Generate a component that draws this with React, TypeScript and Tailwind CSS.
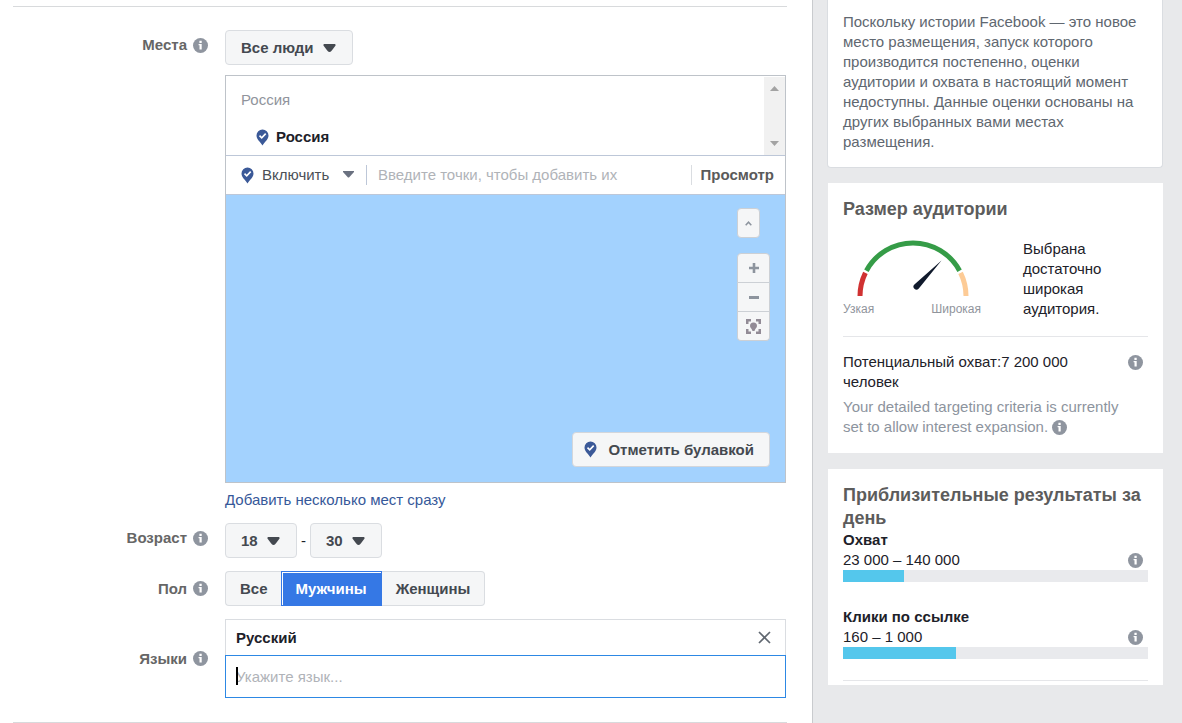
import type { ReactNode } from "react";
import clsx from "clsx";

const GENDERS = ["Все", "Мужчины", "Женщины"];

const RESULTS = [
  { title: "Охват", range: "23 000 – 140 000", percent: 20 },
  { title: "Клики по ссылке", range: "160 – 1 000", percent: 37 },
];

export default function App() {
  return (
    <div className="flex min-h-screen bg-white font-['Liberation_Sans',Arial,sans-serif] text-[15px] leading-5 text-[#1d2129]">
      <main className="min-w-0 flex-1 pt-1.5 pr-[25px] pl-[13px]">
        <div className="flex flex-col gap-[13px] border-y border-[#d8dadc] pt-[23px] pr-px pb-6">
          <Row label="Места" htmlFor="people" top>
            <PickList id="people" value="Все люди" className="w-32 pl-[15px]" />
            <Locations />
            <a href="#bulk" className="mt-[7px] block text-[#365899]">
              Добавить несколько мест сразу
            </a>
          </Row>

          <Row label="Возраст" htmlFor="age-from" top>
            <div className="flex items-center">
              <PickList id="age-from" value="18" className="w-[72px] pl-[15px]" />
              <span className="w-[13px] text-center">-</span>
              <PickList id="age-to" ariaLabel="Возраст до" value="30" className="w-[72px] pl-[15px]" />
            </div>
          </Row>

          <Row label="Пол">
            <div role="radiogroup" aria-label="Пол" className="flex h-[35px]">
              {GENDERS.map((gender, i) => (
                <label
                  key={gender}
                  className={clsx(
                    "relative flex items-center border font-bold",
                    gender === "Мужчины"
                      ? "border-[#3578e5] bg-[#3578e5] px-3.5 text-white shadow-[inset_1px_1px_0_#fff]"
                      : "border-[#dadde1] bg-[#f5f6f7] text-[#444950]",
                    i === 0 && "rounded-l-sm border-r-0 pr-[13px] pl-3.5",
                    i === 2 && "rounded-r-sm border-l-0 px-3.5",
                  )}
                >
                  <input
                    type="radio"
                    name="gender"
                    value={gender}
                    defaultChecked={gender === "Мужчины"}
                    className="sr-only"
                  />
                  {gender}
                </label>
              ))}
            </div>
          </Row>

          <Row label="Языки" htmlFor="language">
            <div className="flex h-9 items-center justify-between border border-b-0 border-[#dadde1] pr-3.5 pl-2.5">
              <span className="font-bold">Русский</span>
              <button type="button" aria-label="Удалить язык">
                <svg width="13" height="13" viewBox="0 0 13 13" stroke="#606770" strokeWidth="1.7">
                  <path d="M1 1l11 11M12 1L1 12" />
                </svg>
              </button>
            </div>
            <div className="relative h-[43px] border border-[#2d88e4]">
              <span className="absolute top-[11px] left-2.5 h-[18px] w-0.5 bg-black" />
              <input
                id="language"
                type="text"
                placeholder="Укажите язык..."
                className="h-full w-full px-2.5 outline-none placeholder:text-[#b0b3b8]"
              />
            </div>
          </Row>
        </div>
      </main>

      <Sidebar />
    </div>
  );
}

function Row({
  label,
  htmlFor,
  top,
  children,
}: {
  label: string;
  htmlFor?: string;
  top?: boolean;
  children: ReactNode;
}) {
  return (
    <div className={clsx("grid grid-cols-[195px_1fr] gap-[17px]", top ? "items-start" : "items-center")}>
      <div className={clsx("flex items-center justify-end gap-1.5 font-bold text-[#666]", top && "pt-[5px]")}>
        {htmlFor ? <label htmlFor={htmlFor}>{label}</label> : <span>{label}</span>}
        <InfoIcon />
      </div>
      <div className="min-w-0">{children}</div>
    </div>
  );
}

function PickList({
  id,
  value,
  className,
  ariaLabel,
}: {
  id: string;
  value: string;
  className: string;
  ariaLabel?: string;
}) {
  return (
    <div className="relative w-fit">
      <select
        id={id}
        aria-label={ariaLabel}
        className={clsx(
          "block h-[35px] appearance-none rounded-sm border border-[#dadde1] bg-[#f5f6f7] font-bold text-[#444950]",
          className,
        )}
      >
        <option>{value}</option>
      </select>
      <svg
        className="pointer-events-none absolute top-3.5 right-[17px]"
        width="13"
        height="8"
        viewBox="0 0 13 8"
        fill="#444950"
      >
        <path d="M1 0h11Q13 .5 12.4 1.8L8.4 7Q7.6 8 6.500 8T4.600 7L.6 1.800Q0 .5 1 0z" />
      </svg>
    </div>
  );
}

function Locations() {
  return (
    <div className="mt-2.5 border border-[#bec3c9]">
      <div className="flex h-[79px] justify-between">
        <div className="pt-3.5 pl-[15px]">
          <p className="text-[#90949c]">Россия</p>
          <p className="mt-[17px] flex items-center gap-[7px] pl-[15px] font-bold">
            <PinIcon />
            Россия
          </p>
        </div>
        <div className="mt-px flex w-[21px] flex-col items-center justify-between bg-[#f1f1f1] py-[9px]">
          <svg width="9" height="5" viewBox="0 0 9 5" fill="#a3a3a3">
            <path d="M0 5L4.5 0 9 5z" />
          </svg>
          <svg width="9" height="5" viewBox="0 0 9 5" fill="#a3a3a3">
            <path d="M0 0l4.5 5L9 0z" />
          </svg>
        </div>
      </div>

      <div className="flex h-10 items-center border-y border-[#bdc7d8] pr-[11px] pl-[15px]">
        <PinIcon />
        <div className="relative ml-2">
          <select aria-label="Тип" className="block w-24 appearance-none text-[#4b4f56]">
            <option>Включить</option>
          </select>
          <svg
            className="pointer-events-none absolute top-1.5 right-1"
            width="11"
            height="7"
            viewBox="0 0 11 7"
            fill="#6a7180"
          >
            <path d="M0 0h11v1L6 6.6H5L0 1z" />
          </svg>
        </div>
        <input
          type="text"
          aria-label="Точки"
          placeholder="Введите точки, чтобы добавить их"
          className="ml-2 min-w-0 flex-1 border-l border-[#bdc7d8] pl-[11px] outline-none placeholder:text-[#b0b3b8]"
        />
        <button type="button" className="border-l border-[#dadde1] pl-[9px] font-bold text-[#5a5a5a]">
          Просмотр
        </button>
      </div>

      <div className="flex h-[287px] flex-col items-end justify-between bg-[#a3d2fe] px-[15px] pt-[13px] pb-[15px]">
        <div className="flex w-[33px] flex-col items-start gap-[15px]">
          <MapButton label="Свернуть" className="h-[30px] w-[23px] rounded-sm border">
            <svg width="7" height="5" viewBox="0 0 7 5" fill="none" stroke="#8d949e" strokeWidth="1.5">
              <path d="M.7 4.2L3.5 1.2l2.8 3" />
            </svg>
          </MapButton>
          <div className="flex w-full flex-col">
            <MapButton label="Увеличить" className="h-[30px] rounded-t-sm border">
              <svg width="10" height="10" viewBox="0 0 10 10" fill="#8d949e">
                <path d="M3.7 0h2.6v3.7H10v2.6H6.3V10H3.7V6.3H0V3.7h3.7z" />
              </svg>
            </MapButton>
            <MapButton label="Уменьшить" className="h-[29px] border-x border-b">
              <svg width="10" height="3" viewBox="0 0 10 3" fill="#8d949e">
                <path d="M0 0h10v3H0z" />
              </svg>
            </MapButton>
            <MapButton label="Центрировать" className="h-[29px] rounded-b-sm border-x border-b">
              <svg width="15" height="15" viewBox="0 0 15 15" fill="#928b96">
                <path d="M0 0h5v2.5H2.5V5H0zM10 0h5v5h-2.5V2.5H10zM0 10h2.5v2.5H5V15H0zM12.5 10H15v5h-5v-2.5h2.5z" />
                <path d="M7.5 3.5A3.5 3.5 0 0 1 11 7C11 9 9 9.5 8.5 12h-2C6 9.5 4 9 4 7A3.5 3.5 0 0 1 7.5 3.5z" />
              </svg>
            </MapButton>
          </div>
        </div>
        <button
          type="button"
          className="flex h-[35px] items-center gap-[11px] rounded-sm border border-[#d3d6db] bg-[#f5f6f7] pr-[15px] pl-[11px] font-bold text-[#444950]"
        >
          <PinIcon />
          Отметить булавкой
        </button>
      </div>
    </div>
  );
}

function MapButton({ label, className, children }: { label: string; className: string; children: ReactNode }) {
  return (
    <button
      type="button"
      aria-label={label}
      className={clsx("flex items-center justify-center border-[#ccd0d5] bg-[#f5f6f7]", className)}
    >
      {children}
    </button>
  );
}

function Sidebar() {
  return (
    <aside className="w-[370px] shrink-0 border-l border-[#c9cbce] bg-[#e8e9eb] pr-[19px] pl-3.5">
      <section className="rounded-b-sm border border-t-0 border-[#dadde1] bg-white px-[15px] pt-3 pb-[15px] text-[#606770]">
        Поскольку истории Facebook — это новое место размещения, запуск которого производится постепенно, оценки
        аудитории и охвата в настоящий момент недоступны. Данные оценки основаны на других выбранных вами местах
        размещения.
      </section>

      <section className="mt-[15px] ml-px bg-white px-[15px] pt-[15px] pb-4">
        <h2 className="text-lg leading-[23px] font-bold text-[#5c5c5c]">Размер аудитории</h2>
        <div className="mt-[18px] flex gap-[42px]">
          <div className="w-[138px] shrink-0">
            <Gauge />
            <div className="mt-1 flex justify-between text-xs leading-[18px] text-[#90949c]">
              <span>Узкая</span>
              <span>Широкая</span>
            </div>
          </div>
          <p>Выбрана достаточно широкая аудитория.</p>
        </div>
        <div className="mt-[17px] flex items-start justify-between border-t border-[#e5e6e9] pt-[15px] pr-[5px]">
          <p className="w-60">Потенциальный охват:7 200 000 человек</p>
          <InfoIcon className="mt-[3px]" />
        </div>
        <p className="mt-[5px] pr-5 text-[#8d949e]">
          Your detailed targeting criteria is currently set to allow interest expansion.{" "}
          <InfoIcon className="inline-block align-[-3px]" />
        </p>
      </section>

      <section className="mt-4 ml-px bg-white px-[15px] pt-[15px] pb-1">
        <h2 className="text-lg leading-[23px] font-bold text-[#5c5c5c]">Приблизительные результаты за день</h2>
        <div className="flex flex-col gap-[25px] border-b border-[#e5e6e9] pb-[21px]">
          {RESULTS.map((result) => (
            <div key={result.title}>
              <h3 className="font-bold">{result.title}</h3>
              <div className="flex items-center justify-between pr-[5px]">
                <span>{result.range}</span>
                <InfoIcon />
              </div>
              <div className="h-3 bg-[#e9eaed]">
                <div className="h-full bg-[#54c7ec]" style={{ width: `${result.percent}%` }} />
              </div>
            </div>
          ))}
        </div>
      </section>
    </aside>
  );
}

function Gauge() {
  return (
    <svg className="block" width="138" height="57" viewBox="0 0 138 57" fill="none" strokeWidth="5">
      <path stroke="#d03232" d="M17 57A53 53 0 0 1 22.4 33.8" />
      <path stroke="#359c47" d="M23.4 31.7A53 53 0 0 1 116.6 31.7" />
      <path stroke="#fdcb96" d="M117.6 33.8A53 53 0 0 1 123 57" />
      <path fill="#101a2c" d="M98.5 21.5L75.6 49.7a2.8 2.8 0 1 1-4.2-4.2z" />
    </svg>
  );
}

function InfoIcon({ className }: { className?: string }) {
  return (
    <svg className={clsx("shrink-0", className)} width="15" height="15" viewBox="0 0 15 15">
      <circle cx="7.5" cy="7.5" r="7.5" fill="#8f959f" />
      <path fill="#fff" d="M6.4 2.7h2.3v2.2H6.4zM5.6 6.1h3.1v5.3H6.5V7.3h-.9z" />
    </svg>
  );
}

function PinIcon() {
  return (
    <svg className="shrink-0" width="13" height="17" viewBox="0 0 13 17">
      <path fill="#3b5998" d="M6.5 .5A6 6 0 0 1 12.5 6.5C12.5 10.5 8.5 13 6.5 16.5 4.5 13 .5 10.5 .5 6.5A6 6 0 0 1 6.5 .5z" />
      <path fill="none" stroke="#fff" strokeWidth="1.6" d="M3.5 6.7l2.2 2.1 4-4.2" />
    </svg>
  );
}
